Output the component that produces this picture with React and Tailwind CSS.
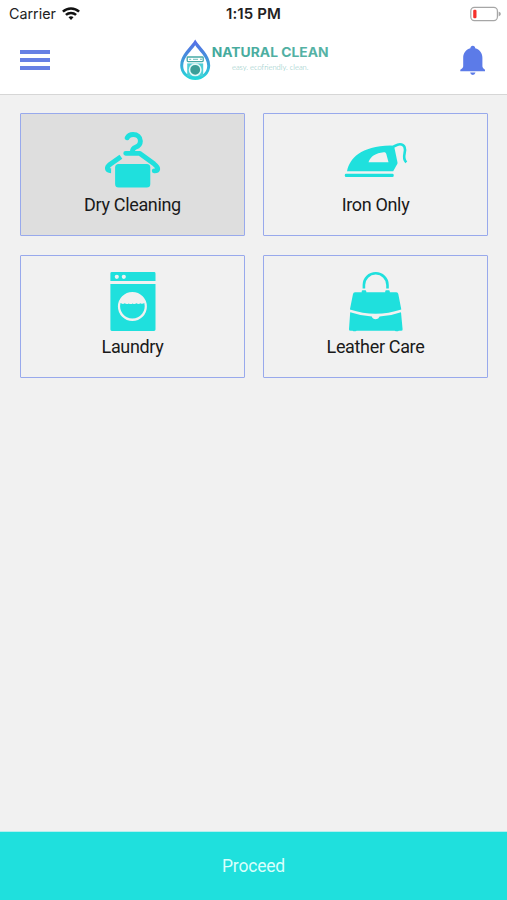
import React from 'react';

const TEAL = '#1fe0dd';

function HangerIcon() {
  return (
    <svg width="71" height="64" viewBox="97 129 71 64" fill="none" stroke={TEAL} strokeLinecap="round" strokeLinejoin="round">
      <path d="M127.200 137.800c1-2.200 3.100-3.300 5.900-3.300 4.200 0 7.300 2.800 7.300 6.500 0 3.100-1.900 5.200-4.900 6.300-2.200.8-3 1.800-3.100 4.300" strokeWidth="4.900" />
      <path d="M129.500 152.500q3-2.500 6 0z" fill={TEAL} strokeWidth="2" />
      <path d="M125.700 153.300h13.800l14.500 10.500c5.500 4.300 4.400 7.200.2 7" strokeWidth="4.800" />
      <path d="M120.900 156.700l-10.700 7.500c-4.200 3.300-3.500 6.500.9 6.600" strokeWidth="4.900" strokeLinecap="butt" />
      <rect x="115.100" y="164" width="35.200" height="23.500" rx="3.500" fill={TEAL} stroke="none" />
    </svg>
  );
}

function IronIcon() {
  return (
    <svg width="71" height="64" viewBox="340 129 71 64" fill={TEAL}>
      <path
        fillRule="evenodd"
        d="M347 171.200C350 158 360.500 146.500 390.500 145.500c2.500 0 3.400.7 4 2.500l3 14.500c.2 1-.4 2-1.100 2.900l-3.200 5.800zM368.500 162.300h20l-2.200-8.200c-.4-1.500-1.200-2-2.700-1.800-7.800.8-12.900 3.800-15.100 10z"
      />
      <rect x="344.800" y="173.700" width="48.900" height="3.200" rx="1.200" />
      <path d="M389.500 147.300c5 1 5.500-3.100 10.500-3.100 4.800 0 5.700 4.500 4.600 9-.8 3.400-.4 7 1.700 9.200" fill="none" stroke={TEAL} strokeWidth="2.600" />
    </svg>
  );
}

function WasherIcon() {
  return (
    <svg width="71" height="64" viewBox="97 271 71 64" fill={TEAL}>
      <path fillRule="evenodd" d="M111.800 272h42.300q1.400 0 1.400 1.400v7.600h-45.100v-7.600q0-1.400 1.400-1.400zM116.800 274.700a2.100 2.100 0 1 0 0 4.200 2.100 2.100 0 1 0 0-4.200zM123.800 274.700a2.100 2.100 0 1 0 0 4.200 2.100 2.100 0 1 0 0-4.200z" />
      <path fillRule="evenodd" d="M110.400 284h45.100v45.600q0 1.400-1.400 1.400h-42.300q-1.400 0-1.400-1.400zM132.400 291.900a14.500 14.500 0 1 0 0 29 14.500 14.500 0 1 0 0-29z" />
      <path d="M120.500 303.100q2.200 1.500 4.200.2 2 1.500 4 .1 2 1.300 3.900 0 2 1.400 3.900-.1 2 1.400 4 0 1.900 1.100 3.800-.2a12.300 12.300 0 1 1-23.800 0z" />
    </svg>
  );
}

function HandbagIcon() {
  return (
    <svg width="71" height="64" viewBox="340 271 71 64" fill={TEAL}>
      <path d="M363.900 288.500v-3.600a11.800 11.600 0 0 1 23.600 0v3.600" fill="none" stroke={TEAL} strokeWidth="2.600" />
      <path d="M354.800 292.200h6.900v-.8q0-1.200 1.200-1.200h2.200q1.200 0 1.200 1.200v.8h18.900v-.8q0-1.200 1.200-1.200h2.200q1.200 0 1.200 1.200v.8h6.500q1.700 0 2 1.700l3 15.600q-25.700 8.500-51.400 0l3.100-15.600q.3-1.700 2-1.700z" />
      <path d="M350.200 312.200q11 3.700 21.600 4.400.8 2.600 3.900 2.600t3.900-2.600q11.200-.7 21.400-4.400l1.600 17q.2 1.500-1.500 1.500h-2.200q-1.900 1-4.200 0h-38q-2.300 1-4.200 0h-1.800q-1.900 0-1.700-1.500z" />
    </svg>
  );
}

function Logo() {
  return (
    <svg width="154" height="46" viewBox="177 37 154 46" className="absolute left-[177px] top-[10px]">
      <defs>
        <linearGradient id="drop" x1="0" y1="0" x2="0" y2="1">
          <stop offset="0" stopColor="#586be8" />
          <stop offset=".5" stopColor="#4096d9" />
          <stop offset="1" stopColor="#22dcda" />
        </linearGradient>
        <linearGradient id="wordmark" x1="0" y1="0" x2="1" y2="0">
          <stop offset="0" stopColor="#43a99c" />
          <stop offset="1" stopColor="#58b3a6" />
        </linearGradient>
      </defs>
      <path d="M195.200 39.500C191.200 46.500 180.200 54.500 180.200 65.500a15 14.500 0 0 0 30 0c0-11-11-19-15-26z" fill="url(#drop)" />
      <path d="M195.200 45.200c-3 5-12 11.800-12 20.300 0 2.200.4 4 1.300 5.600q1 1.700 2.400 3h16.600q1.400-1.300 2.400-3c.9-1.600 1.300-3.400 1.300-5.600 0-8.500-9-15.300-12-20.300z" fill="#fff" />
      <path d="M187.200 63.400h16v13h-16z" fill="#4fcfd6" />
      <rect x="187.200" y="57" width="16" height="4.600" rx=".8" fill="#fff" stroke="#46aaa7" strokeWidth="1.300" />
      <path d="M189.200 59.300h2M193 59.300h5" stroke="#6cbcb8" strokeWidth="1" />
      <circle cx="201" cy="59.300" r=".8" fill="#46aaa7" />
      <circle cx="195.200" cy="69.800" r="5.700" fill="#3b9e98" stroke="#e3f9f7" strokeWidth="1.600" />
      <text x="211.700" y="57.300" textLength="117" lengthAdjust="spacingAndGlyphs" fill="url(#wordmark)" className="font-['Inter',sans-serif] text-[13px] font-bold">NATURAL CLEAN</text>
      <text x="232" y="70" textLength="76.500" lengthAdjust="spacingAndGlyphs" fill="#82c3bc" className="font-['Lato',sans-serif] text-[7.800px] font-light">easy. ecofriendly. clean.</text>
    </svg>
  );
}

function StatusBar() {
  return (
    <div className="relative flex h-[27px] items-center justify-between pl-[9px] pr-[6px] text-[#222]">
      <div className="flex items-center gap-[6px]">
        <span className="text-[14.300px] leading-[27px]">Carrier</span>
        <svg width="18" height="14" viewBox="0 0 18 14" fill="none" stroke="#111" strokeWidth="2.500">
          <path d="M.9 4.600c4.500-4.300 11.700-4.300 16.200 0" />
          <path d="M3.900 7.900c2.900-2.700 7.300-2.700 10.200 0" />
          <path d="M9 13l-2.500-2.700c1.400-1.300 3.600-1.300 5 0z" fill="#111" stroke="none" />
        </svg>
      </div>
      <span className="absolute left-1/2 -translate-x-1/2 whitespace-nowrap text-[15px] font-semibold leading-[27px] tracking-[0.1px]">1:15 PM</span>
      <svg width="31" height="16" viewBox="470 5 31 16">
        <rect x="470.800" y="6.400" width="26.600" height="13.200" rx="3.600" fill="#fff" stroke="#a6a6a6" strokeWidth="1.200" />
        <rect x="473.200" y="8.800" width="3.300" height="8.400" rx="1.200" fill="#f5302c" />
        <path d="M498.600 10.600q2.300.9 2.300 2.400t-2.300 2.400z" fill="#a6a6a6" />
      </svg>
    </div>
  );
}

const services = [
  { name: 'Dry Cleaning', Icon: HangerIcon, selected: true },
  { name: 'Iron Only', Icon: IronIcon },
  { name: 'Laundry', Icon: WasherIcon },
  { name: 'Leather Care', Icon: HandbagIcon },
];

export default function App() {
  return (
    <div className="flex h-[900px] w-[507px] flex-col overflow-hidden bg-[#f1f1f1] font-['Roboto',sans-serif]">
      <header className="h-[95px] border-b border-[#d6d6d6] bg-white font-['Inter',sans-serif]">
        <StatusBar />
        <div className="relative flex h-[67px] items-center justify-between pl-5 pr-[21px]">
          <button aria-label="Menu" className="mt-[-2px] flex flex-col gap-1">
            <span className="h-1 w-[30px] bg-[#6780e4]" />
            <span className="h-1 w-[30px] bg-[#6780e4]" />
            <span className="h-1 w-[30px] bg-[#6780e4]" />
          </button>
          <Logo />
          <button aria-label="Notifications">
            <svg width="26" height="32" viewBox="460 44 26 32" fill="#5c7be8">
              <path d="M472.800 44.700c1.500 0 2.400 1 2.400 2.500 4.400 1.200 7.200 4.700 7.200 9.500v8.500c0 1.700 1.400 2.300 2.600 3.600v1.400h-24.700v-1.400c1.500-1.300 2.900-1.900 2.900-3.600v-8.500c0-4.800 2.800-8.300 7.200-9.500 0-1.500.9-2.500 2.400-2.500z" />
              <path d="M470.100 71.500h5.400q-.5 2.400-2.700 2.400t-2.700-2.400z" />
            </svg>
          </button>
        </div>
      </header>
      <main className="grid flex-1 grid-cols-2 content-start gap-x-[18px] gap-y-[19px] pl-5 pr-[19px] pt-[18px]">
        {services.map(({ name, Icon, selected }) => (
          <button
            key={name}
            className={`flex h-[123px] flex-col items-center rounded-[1px] border border-[#98a9ec] pt-[15px] ${selected ? 'bg-[#dedede]' : ''}`}
          >
            <Icon />
            <span className="text-[18px] leading-[23px] tracking-[-0.34px] text-[#1a1a1a]">{name}</span>
          </button>
        ))}
      </main>
      <button className="h-[69px] border-t border-[#b5eeee] bg-[#1fe0dd] text-[17.500px] tracking-[-0.2px] text-[#d8fffc]">Proceed</button>
    </div>
  );
}
